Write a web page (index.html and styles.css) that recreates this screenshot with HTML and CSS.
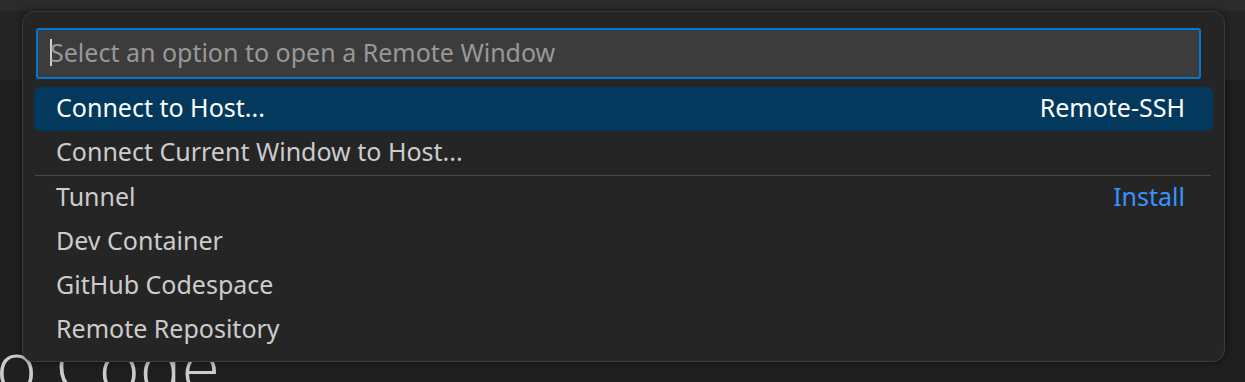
FILE: index.html
```html
<!DOCTYPE html>
<html>
<head>
<meta charset="utf-8">
<link rel="stylesheet" href="styles.css">
</head>
<body>
<div class="page">
  <div class="topbar"><div class="titlestrip"></div></div>
  <div class="content">
    <div class="hero">o Code</div>
  </div>
  <div class="quickpick">
    <div class="inputbox">
      <span class="caret"></span><span class="placeholder">Select an option to open a Remote Window</span>
    </div>
    <div class="list">
      <div class="row selected"><span class="label">Connect to Host...</span><span class="detail">Remote-SSH</span></div>
      <div class="row"><span class="label">Connect Current Window to Host...</span></div>
      <div class="sep"></div>
      <div class="row"><span class="label">Tunnel</span><span class="detail link">Install</span></div>
      <div class="row"><span class="label">Dev Container</span></div>
      <div class="row"><span class="label">GitHub Codespace</span></div>
      <div class="row"><span class="label">Remote Repository</span></div>
    </div>
  </div>
</div>
</body>
</html>
```
FILE: styles.css
```css
* { box-sizing: border-box; }
html, body { margin: 0; padding: 0; }
body {
  width: 1245px;
  height: 382px;
  overflow: hidden;
  background: #1f1f1f;
  font-family: "Noto Sans", "Open Sans", sans-serif;
}
.page {
  position: relative;
  width: 1245px;
  height: 382px;
  overflow: hidden;
  display: flex;
  flex-direction: column;
}
.topbar {
  height: 80px;
  background: #252525;
  flex: none;
}
.titlestrip {
  height: 11px;
  background: #2b2b2b;
}
.content {
  flex: 1;
  display: flex;
  align-items: flex-end;
}
.hero {
  font-family: "Open Sans", sans-serif;
  font-weight: 300;
  font-size: 70px;
  line-height: 70px;
  height: 52px;
  overflow: hidden;
  color: #cccccc;
  margin-left: -4px;
  padding-top: 0;
  white-space: nowrap;
}
.quickpick {
  position: absolute;
  left: 22px;
  top: 11px;
  width: 1203px;
  height: 351px;
  background: #252526;
  border: 1px solid #3a3a3a;
  border-radius: 12px;
  box-shadow: 0 0 8px rgba(0,0,0,0.5);
  padding: 16px 11px 0 11px;
}
.inputbox {
  height: 51px;
  margin: 0 12px 0 2px;
  background: #3c3c3c;
  border: 2px solid #0078d4;
  border-radius: 3px;
  display: flex;
  align-items: center;
  padding-left: 12px;
  padding-bottom: 3px;
}
.caret {
  width: 2px;
  height: 27px;
  background: #d0d0d0;
  flex: none;
}
.placeholder {
  color: #989898;
  font-size: 25px;
  margin-left: -2px;
  white-space: nowrap;
}
.list {
  margin-top: 8px;
  display: flex;
  flex-direction: column;
}
.row {
  height: 44px;
  display: flex;
  align-items: center;
  justify-content: space-between;
  padding: 0 28px 4px 22px;
  color: #cccccc;
  font-size: 25px;
  border-radius: 6px;
  white-space: nowrap;
}
.row.selected {
  background: #04395e;
  color: #ffffff;
}
.link { color: #3794ff; }
.sep {
  height: 1px;
  background: #4a4a4a;
  margin: 0 2px 0 1px;
}
```
